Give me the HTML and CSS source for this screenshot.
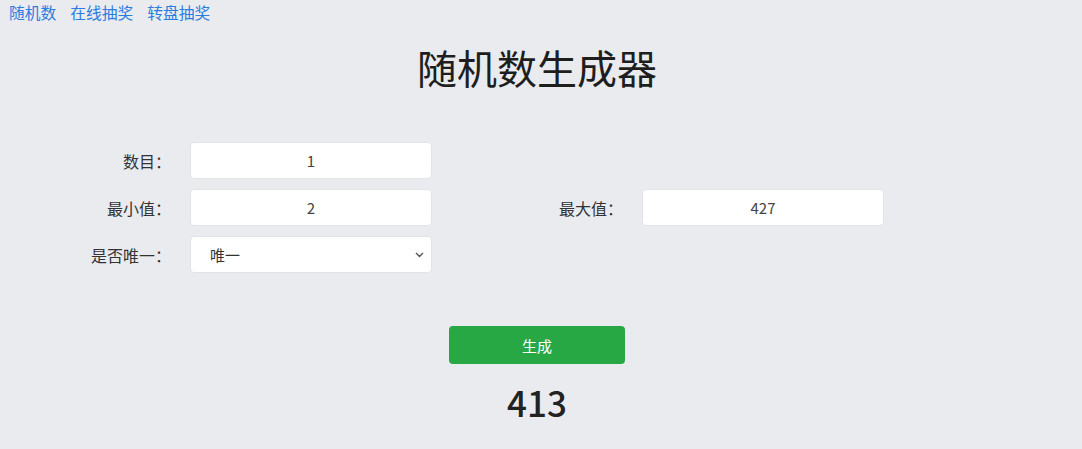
FILE: index.html
```html
<!DOCTYPE html>
<html lang="zh-CN">
<head>
<meta charset="utf-8">
<title>随机数生成器</title>
<link rel="stylesheet" href="styles.css">
</head>
<body>
<nav class="topnav">
  <a href="#">随机数</a>
  <a href="#">在线抽奖</a>
  <a href="#">转盘抽奖</a>
</nav>
<main class="page">
  <h1 class="title">随机数生成器</h1>
  <form class="form-grid">
    <label class="lbl">数目：</label>
    <input class="field" type="text" value="1">
    <span class="spacer"></span>
    <span class="spacer"></span>

    <label class="lbl">最小值：</label>
    <input class="field" type="text" value="2">
    <label class="lbl">最大值：</label>
    <input class="field" type="text" value="427">

    <label class="lbl">是否唯一：</label>
    <div class="select-wrap">
      <select class="field select">
        <option>唯一</option>
        <option>不唯一</option>
      </select>
      <svg class="chev" width="9" height="6" viewBox="0 0 9 6"><path d="M1 1 L4.5 4.5 L8 1" fill="none" stroke="#555" stroke-width="1.4"/></svg>
    </div>
  </form>
  <div class="actions">
    <button class="btn" type="button">生成</button>
    <div class="result">413</div>
  </div>
</main>
</body>
</html>
```

FILE: styles.css
```css
* { box-sizing: border-box; }
html, body {
  margin: 0;
  background: #e9ebef;
  font-family: "Noto Sans CJK SC", "Noto Sans", sans-serif;
  color: #222;
}
.topnav {
  display: flex;
  gap: 14px;
  padding: 3px 9px 0;
  font-size: 15.75px;
  line-height: 20px;
}
.topnav a {
  color: #2b7de0;
  text-decoration: none;
}
.page {
  width: calc(100% - 8px);
}
.title {
  margin: 20px 0 0;
  text-align: center;
  font-size: 40px;
  line-height: 48px;
  font-weight: 400;
  color: #1e1e1e;
}
.form-grid {
  margin: 51px 0 0 8px;
  display: grid;
  grid-template-columns: 163px 242px 172px 242px;
  column-gap: 19px;
  row-gap: 10px;
  grid-auto-rows: 37px;
}
.lbl {
  display: flex;
  align-items: center;
  justify-content: flex-end;
  font-size: 16px;
  color: #333;
}
.field {
  width: 100%;
  height: 37px;
  border: 1px solid #e0e3e8;
  border-radius: 4px;
  background: #fff;
  font-family: "Noto Sans CJK SC", "Noto Sans", sans-serif;
  font-size: 15px;
  color: #444;
  text-align: center;
  outline: none;
  margin: 0;
}
.select-wrap {
  position: relative;
}
.select {
  appearance: none;
  -webkit-appearance: none;
  text-align: left;
  padding: 0 30px 0 19px;
  color: #333;
}
.chev {
  position: absolute;
  right: 8px;
  top: 16px;
  pointer-events: none;
}
.actions {
  display: flex;
  flex-direction: column;
  align-items: center;
}
.btn {
  margin-top: 53px;
  width: 176px;
  height: 38px;
  border: none;
  border-radius: 4px;
  background: #28a745;
  color: #fff;
  font-family: "Noto Sans CJK SC", "Noto Sans", sans-serif;
  font-size: 15px;
}
.result {
  margin-top: 16px;
  font-size: 35px;
  line-height: 44px;
  font-weight: 500;
  color: #222;
}
```
